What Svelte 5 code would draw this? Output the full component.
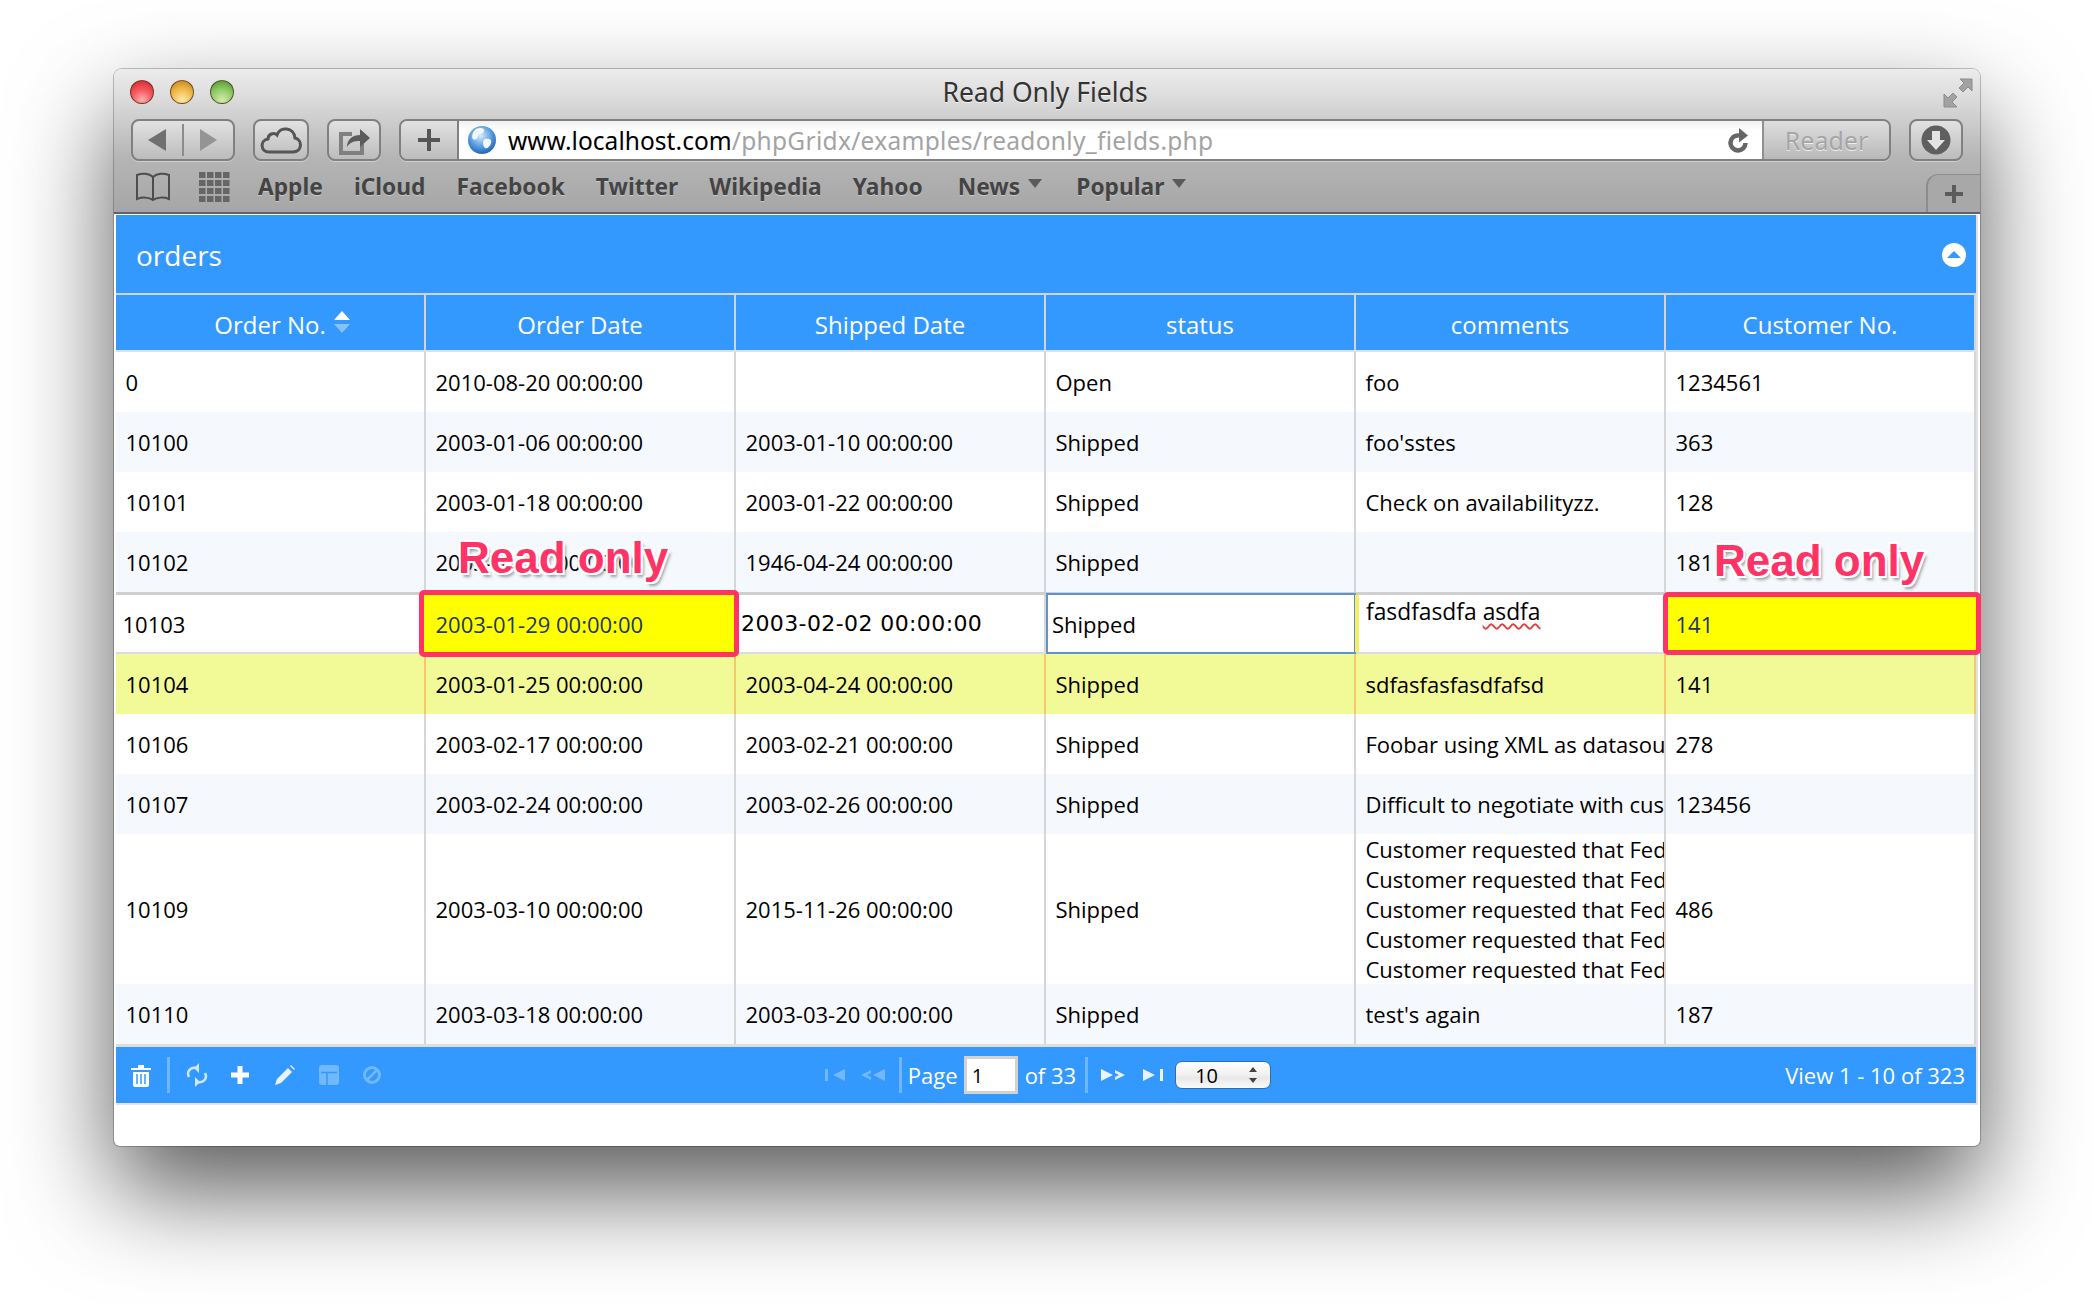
<script>
    const columns = ["Order No.", "Order Date", "Shipped Date", "status", "comments", "Customer No."];

    const fed = "Customer requested that FedEx Ground deliver the shipment";

    const rows = [
        { cells: ["0", "2010-08-20 00:00:00", "", "Open", "foo", "1234561"] },
        { cells: ["10100", "2003-01-06 00:00:00", "2003-01-10 00:00:00", "Shipped", "foo'sstes", "363"], alt: true },
        { cells: ["10101", "2003-01-18 00:00:00", "2003-01-22 00:00:00", "Shipped", "Check on availabilityzz.", "128"] },
        { cells: ["10102", "2003-01-24 00:00:00", "1946-04-24 00:00:00", "Shipped", "", "181"], alt: true },
    ];

    const rowsAfter = [
        { cells: ["10104", "2003-01-25 00:00:00", "2003-04-24 00:00:00", "Shipped", "sdfasfasfasdfafsd", "141"], hover: true },
        { cells: ["10106", "2003-02-17 00:00:00", "2003-02-21 00:00:00", "Shipped", "Foobar using XML as datasource for the grid", "278"] },
        { cells: ["10107", "2003-02-24 00:00:00", "2003-02-26 00:00:00", "Shipped", "Difficult to negotiate with customer on price", "123456"], alt: true },
        { cells: ["10109", "2003-03-10 00:00:00", "2015-11-26 00:00:00", "Shipped", [fed, fed, fed, fed, fed], "486"] },
        { cells: ["10110", "2003-03-18 00:00:00", "2003-03-20 00:00:00", "Shipped", "test's again", "187"], alt: true },
    ];

    const bookmarks = ["Apple", "iCloud", "Facebook", "Twitter", "Wikipedia", "Yahoo"];
</script>

{#snippet gridRow(row)}
    <div class="row" class:alt={row.alt} class:hover={row.hover}>
        {#each row.cells as cell}
            <div class="cell">
                {#if Array.isArray(cell)}
                    <div class="lines">
                        {#each cell as line}
                            <div>{line}</div>
                        {/each}
                    </div>
                {:else}
                    {cell}
                {/if}
            </div>
        {/each}
    </div>
{/snippet}

<div class="page">
<div class="window">
    <div class="chrome">
        <div class="titlebar">
            <div class="lights">
                <span class="light red"></span>
                <span class="light amber"></span>
                <span class="light green"></span>
            </div>
            <div class="title">Read Only Fields</div>
            <svg class="expand" width="30" height="30" viewBox="0 0 30 30">
                <path d="M17 1h12v12l-4-4-5 5-4-4 5-5zM1 29V16l4 4 5-5 4 4-5 5 5 5z" fill="#a2a2a2" stroke="#8c8c8c" />
            </svg>
        </div>

        <div class="toolbar">
            <div class="btn navs">
                <svg width="100" height="38" viewBox="0 0 100 38">
                    <path d="M33 8v22L15 19z" fill="#707070" />
                    <path d="M67 8v22l17-11z" fill="#949494" />
                    <path d="M50 3v32" stroke="#8c8c8c" stroke-width="2" />
                </svg>
            </div>
            <div class="btn icon-btn cloud">
                <svg width="42" height="30" viewBox="0 0 42 30">
                    <path d="M9 27c-9 0-9-12-1-13 0-5 6-7 9-4 3-9 17-8 18 3 8 2 7 14-2 14z" fill="none" stroke="#555" stroke-width="3" />
                </svg>
            </div>
            <div class="btn icon-btn share">
                <svg width="34" height="32" viewBox="0 0 34 32">
                    <path d="M2 8h13v4H6v15h17v-7h4v11H2z" fill="#808080" />
                    <path d="M10 23c0-8 6-12 13-12V5l10 9-10 9v-6c-6 0-10 1-13 6z" fill="#5c5c5c" />
                </svg>
            </div>
            <div class="address">
                <div class="add">
                    <svg width="22" height="22" viewBox="0 0 22 22">
                        <path d="M9 0h4v9h9v4h-9v9H9v-9H0V9h9z" fill="#555" />
                    </svg>
                </div>
                <div class="url">
                    <svg class="globe" width="28" height="30" viewBox="0 0 28 30">
                        <defs>
                            <radialGradient id="sea" cx="45%" cy="35%" r="70%">
                                <stop offset="0" stop-color="#d6ecfb" />
                                <stop offset="0.6" stop-color="#4f95dd" />
                                <stop offset="1" stop-color="#1d5bb0" />
                            </radialGradient>
                        </defs>
                        <circle cx="14" cy="15" r="14" fill="url(#sea)" />
                        <path d="M8 4c4-2 9-1 8 2-1 4-5 2-6 5s-3 5-5 3 0-8 3-10zM17 14c4-1 7 0 6 4s-4 6-6 5-3-8 0-9z" fill="#f2f7fb" />
                    </svg>
                    <span class="host">www.localhost.com</span><span class="path">/phpGridx/examples/readonly_fields.php</span>
                    <svg class="reload" width="22" height="26" viewBox="0 0 22 26">
                        <path d="M11 8.500A7.500 7.500 0 1 0 17.500 16" fill="none" stroke="#666" stroke-width="4.500" />
                        <path d="M11 1l9 7.500-9 7z" fill="#666" />
                    </svg>
                </div>
                <div class="reader">Reader</div>
            </div>
            <div class="btn icon-btn download">
                <svg width="30" height="30" viewBox="0 0 30 30">
                    <circle cx="15" cy="15" r="14.500" fill="#5f5f5f" />
                    <path d="M11 6h8v9h5l-9 10-9-10h5z" fill="#e4e4e4" />
                </svg>
            </div>
        </div>

        <div class="bookmarks">
            <svg class="book" width="36" height="32" viewBox="0 0 36 32">
                <path d="M18 6C14 2 7 2 2 4v24c5-2 12-2 16 1 4-3 11-3 16-1V4c-5-2-12-2-16 2zM18 6v23" fill="none" stroke="#4d4d4d" stroke-width="2" />
            </svg>
            <svg class="apps" width="31" height="30" viewBox="0 0 31 30">
                {#each [0, 1, 2, 3] as r}
                    {#each [0, 1, 2, 3] as c}
                        <rect x={c * 8} y={r * 8} width="6.500" height="6" fill="#666" />
                    {/each}
                {/each}
            </svg>
            {#each bookmarks as mark}
                <span class="mark">{mark}</span>
            {/each}
            <span class="mark menu news">News<i class="caret"></i></span>
            <span class="mark menu popular">Popular<i class="caret"></i></span>
            <div class="newtab">
                <svg width="18" height="18" viewBox="0 0 18 18">
                    <path d="M7 0h4v7h7v4h-7v7H7v-7H0V7h7z" fill="#5b5b5b" />
                </svg>
            </div>
        </div>
    </div>

    <div class="content">
        <div class="grid">
            <div class="caption">
                <span>orders</span>
                <svg width="24" height="24" viewBox="0 0 24 24">
                    <circle cx="12" cy="12" r="12" fill="#fff" />
                    <path d="M5 15l7-7 7 7z" fill="#3399ff" />
                </svg>
            </div>
            <div class="head">
                {#each columns as col, i}
                    <div class="th">
                        {col}
                        {#if i === 0}
                            <svg class="sort" width="16" height="22" viewBox="0 0 16 22">
                                <path d="M8 0l8 9H0z" fill="#fff" />
                                <path d="M8 22l8-9H0z" fill="#85c2ff" />
                            </svg>
                        {/if}
                    </div>
                {/each}
            </div>

            {#each rows as row}
                {@render gridRow(row)}
            {/each}

            <div class="row editing">
                <div class="cell plain">10103</div>
                <div class="cell readonly">2003-01-29 00:00:00</div>
                <div class="cell mono">2003-02-02 00:00:00</div>
                <div class="cell focus">Shipped</div>
                <div class="cell area">fasdfasdfa <span class="typo">asdfa</span></div>
                <div class="cell readonly last">141</div>
            </div>

            {#each rowsAfter as row}
                {@render gridRow(row)}
            {/each}

            <div class="pager">
                <div class="pg-left">
                    <svg class="ico" width="22" height="24" viewBox="0 0 22 24">
                        <path d="M1 5h20v2H1zM8 2h6v3H8zM3 9h16v13a2 2 0 0 1-2 2H5a2 2 0 0 1-2-2z" fill="#fff" />
                        <path d="M7 11v10M11 11v10M15 11v10" stroke="#3399ff" stroke-width="1.500" />
                    </svg>
                    <span class="pg-sep"></span>
                    <svg class="ico refresh" width="22" height="24" viewBox="0 0 22 24">
                        <path d="M3 14c-3-6 2-10 7-9M19 10c3 6-2 10-7 9" fill="none" stroke="#cfe6ff" stroke-width="2.500" />
                        <path d="M13 0v10L8 5zM9 14v10l5-5z" fill="#cfe6ff" />
                    </svg>
                    <svg class="ico plus" width="18" height="18" viewBox="0 0 18 18">
                        <path d="M6.500 0h5v6.500H18v5h-6.500V18h-5v-6.500H0v-5h6.500z" fill="#fff" />
                    </svg>
                    <svg class="ico pencil" width="20" height="20" viewBox="0 0 20 20">
                        <path d="M13 3l4 4L6 18l-6 2 2-6zM15 1l1-1 4 4-1 1z" fill="#e8f3ff" />
                    </svg>
                    <svg class="ico save off" width="20" height="20" viewBox="0 0 20 20">
                        <rect width="20" height="20" rx="3" fill="#fff" />
                        <path d="M2 7.500h16M8 8v12" stroke="#3399ff" stroke-width="1.500" />
                    </svg>
                    <svg class="ico cancel off" width="18" height="18" viewBox="0 0 18 18">
                        <circle cx="9" cy="9" r="7.500" fill="none" stroke="#fff" stroke-width="3" />
                        <path d="M4 14L14 4" stroke="#fff" stroke-width="2.500" />
                    </svg>
                </div>

                <div class="pg-center">
                    <svg class="off" width="20" height="14" viewBox="0 0 20 14">
                        <path d="M0 1h3v12H0zM8 7l12-6v12z" fill="#fff" />
                    </svg>
                    <svg class="off prev" width="24" height="14" viewBox="0 0 24 14">
                        <path d="M0 7l10-5v3l-4 2 4 2v3zM12 7l12-6v12z" fill="#fff" />
                    </svg>
                    <span class="pg-sep"></span>
                    <span class="pg-text page-word">Page</span>
                    <span class="pg-input">1</span>
                    <span class="pg-text of-word">of 33</span>
                    <span class="pg-sep"></span>
                    <svg class="next" width="24" height="14" viewBox="0 0 24 14">
                        <path d="M0 1l12 6-12 6zM14 2l10 5-10 5V9l4-2-4-2z" fill="#e8f3ff" />
                    </svg>
                    <svg class="last-ico" width="20" height="14" viewBox="0 0 20 14">
                        <path d="M0 1l12 6-12 6zM17 1h3v12h-3z" fill="#e8f3ff" />
                    </svg>
                    <div class="pg-select">
                        <span>10</span>
                        <svg width="10" height="16" viewBox="0 0 10 16">
                            <path d="M5 0l4 5H1zM5 16l4-5H1z" fill="#444" />
                        </svg>
                    </div>
                </div>

                <div class="pg-right">View 1 - 10 of 323</div>
            </div>

            <div class="note note-date">Read only</div>
            <div class="note note-customer">Read only</div>
        </div>
    </div>
</div>
</div>

<style>
    :global(body) {
        background: #fff;
    }

    .page {
        height: 1304px;
        overflow: hidden;
        padding: 69px 0 0 114px;
        box-sizing: border-box;
    }

    .window {
        box-sizing: border-box;
        width: 1866px;
        height: 1077px;
        display: flex;
        flex-direction: column;
        background: #fff;
        border-radius: 8px 8px 6px 6px;
        box-shadow:
            0 45px 100px rgba(0, 0, 0, 0.65),
            0 0 0 1px rgba(90, 90, 90, 0.35);
    }

    .chrome {
        box-sizing: border-box;
        height: 145px;
        flex: none;
        display: flex;
        flex-direction: column;
        background: linear-gradient(#ececec, #dcdcdc 20%, #b5b5b5 62%, #a6a6a6);
        border-radius: 8px 8px 0 0;
        border-bottom: 2px solid #626262;
        font-family: "Noto Sans", sans-serif;
    }

    .titlebar {
        height: 50px;
        flex: none;
        position: relative;
        display: flex;
        align-items: center;
        justify-content: center;
    }

    .lights {
        position: absolute;
        left: 16px;
        top: 11px;
        display: flex;
        gap: 16px;
    }

    .light {
        width: 24px;
        height: 24px;
        border-radius: 50%;
        box-sizing: border-box;
        border: 1px solid rgba(70, 40, 20, 0.7);
    }

    .red {
        background: radial-gradient(circle at 50% 85%, #ffb0b0, #f65a5f 45%, #d82c30 90%);
    }

    .amber {
        background: radial-gradient(circle at 50% 85%, #ffe8a8, #f0b849 50%, #c88a20 90%);
    }

    .green {
        background: radial-gradient(circle at 50% 85%, #d8e8b0, #8fcb63 50%, #5a9a35 90%);
    }

    .title {
        font-size: 26.500px;
        color: #333;
        text-shadow: 0 1px 0 rgba(255, 255, 255, 0.6);
        margin-top: -4px;
        margin-left: -4px;
    }

    .expand {
        position: absolute;
        right: 7px;
        top: 9px;
    }

    .toolbar {
        height: 42px;
        flex: none;
        display: flex;
        padding: 0 17px;
        gap: 18px;
        box-sizing: border-box;
    }

    .btn {
        box-sizing: border-box;
        height: 42px;
        border: 2px solid #808080;
        border-radius: 8px;
        background: linear-gradient(#e2e2e2, #bcbcbc);
        display: flex;
        align-items: center;
        justify-content: center;
        box-shadow: 0 1px 0 rgba(255, 255, 255, 0.4);
    }

    .navs {
        width: 104px;
    }

    .cloud {
        width: 56px;
    }

    .share {
        width: 54px;
    }

    .download {
        width: 54px;
    }

    .address {
        flex: 1;
        display: flex;
        height: 42px;
        box-sizing: border-box;
        border: 2px solid #808080;
        border-radius: 8px;
        overflow: hidden;
        box-shadow: 0 1px 0 rgba(255, 255, 255, 0.4);
    }

    .add {
        width: 56px;
        flex: none;
        display: flex;
        align-items: center;
        justify-content: center;
        background: linear-gradient(#e2e2e2, #bcbcbc);
        border-right: 2px solid #808080;
    }

    .url {
        flex: 1;
        display: flex;
        align-items: center;
        background: linear-gradient(#f0f0f0, #fff 25%);
        font-size: 24.500px;
        padding-left: 9px;
    }

    .globe {
        margin-right: 12px;
    }

    .host {
        color: #000;
        letter-spacing: 0.05px;
    }

    .path {
        color: #a3a3a3;
        letter-spacing: 0.3px;
    }

    .reload {
        margin-left: auto;
        margin-right: 12px;
    }

    .reader {
        width: 127px;
        flex: none;
        box-sizing: border-box;
        display: flex;
        align-items: center;
        justify-content: center;
        background: linear-gradient(#dedede, #b9b9b9);
        border-left: 2px solid #909090;
        color: #a5a5a5;
        font-size: 25px;
        text-shadow: 0 1px 0 #eee;
    }

    .bookmarks {
        flex: 1;
        display: flex;
        align-items: center;
        position: relative;
        padding-left: 21px;
    }

    .book {
        margin-right: 28px;
    }

    .apps {
        margin-right: 28px;
    }

    .mark {
        font-size: 22.750px;
        font-weight: 700;
        color: #444;
        margin-right: 31px;
        text-shadow: 0 1px 0 rgba(255, 255, 255, 0.35);
    }

    .menu {
        display: flex;
        align-items: center;
        gap: 8px;
    }

    .news {
        margin-left: 4px;
    }

    .popular {
        margin-left: 3px;
    }

    .caret {
        width: 0;
        height: 0;
        border: 7px solid transparent;
        border-top: 9px solid #5a5a5a;
        border-bottom: 0;
        margin-top: -6px;
    }

    .newtab {
        position: absolute;
        right: 0;
        bottom: 0;
        width: 54px;
        height: 38px;
        box-sizing: border-box;
        display: flex;
        align-items: center;
        justify-content: center;
        background: #a8a8a8;
        border-radius: 12px 0 0 0;
        border-left: 2px solid #8c8c8c;
        border-top: 1px solid #8c8c8c;
    }

    .content {
        flex: 1;
        padding: 1px 2px 0;
    }

    .grid {
        position: relative;
        width: 1860px;
        border-right: 2px solid #e2e2e2;
        border-bottom: 2px solid #e5e5e5;
        font-family: "Open Sans", sans-serif;
        font-size: 22px;
        color: #000;
    }

    .caption {
        height: 78px;
        background: #3399ff;
        color: #fff;
        display: flex;
        align-items: center;
        justify-content: space-between;
        box-sizing: border-box;
        padding: 2px 10px 0 20px;
        font-size: 28px;
    }

    .head {
        display: grid;
        grid-template-columns: repeat(6, 310px);
        border-top: 2px solid #d3d3d3;
        border-bottom: 2px solid #e0e0e0;
    }

    .th {
        height: 55px;
        background: #3399ff;
        color: #fff;
        font-size: 24px;
        display: flex;
        align-items: center;
        justify-content: center;
        gap: 8px;
        box-sizing: border-box;
        padding-top: 3px;
        border-right: 2px solid #d3d3d3;
    }

    .sort {
        margin: -5px -24px 0 0;
    }

    .row {
        display: grid;
        grid-template-columns: repeat(6, 310px);
        background: #fff;
    }

    .row.alt {
        background: #f5f9fe;
    }

    .row.hover {
        background: #f2fa98;
    }

    .cell {
        box-sizing: border-box;
        min-height: 60px;
        padding-left: 9.500px;
        display: flex;
        align-items: center;
        white-space: nowrap;
        overflow: hidden;
        border-right: 2px solid #d6d6d6;
    }

    .row.hover .cell {
        border-right-color: #f5c96a;
    }

    .lines {
        line-height: 30px;
    }

    .editing {
        border-top: 3px solid #cfcfcf;
        border-bottom: 2px solid #dcdcdc;
        height: 62px;
        box-sizing: border-box;
    }

    .editing .cell {
        min-height: 0;
    }

    .plain {
        padding-left: 6.500px;
    }

    .cell.readonly {
        position: relative;
        overflow: visible;
        background: #ffff00;
        color: #22365f;
        margin: -2px 0 -2px -4px;
        padding-left: 13.500px;
        outline: 5px solid #ff3366;
        outline-offset: -2px;
        border-radius: 2px;
        z-index: 1;
    }

    .cell.readonly.last {
        margin: 0 -2px 0 0;
        padding-left: 9.500px;
    }

    .cell.mono {
        padding-left: 5px;
        font-family: "DejaVu Sans", sans-serif;
        font-size: 22px;
        letter-spacing: 0.4px;
    }

    .cell.focus {
        padding-left: 4px;
        border: 2px solid #5f94cf;
        margin: -2px 0;
    }

    .cell.area {
        align-items: flex-start;
        padding: 1px 0 0 7px;
        border-left: 4px solid #f7ef60;
        margin-left: -1px;
        font-size: 22.800px;
    }

    .typo {
        text-decoration: underline wavy #e04040 2px;
        text-underline-offset: 3px;
        margin-left: 6px;
    }

    .pager {
        height: 59px;
        box-sizing: border-box;
        border-top: 3px solid #dedede;
        background: #3399ff;
        background-clip: padding-box;
        display: grid;
        grid-template-columns: 1fr auto 1fr;
        align-items: center;
        color: #fff;
    }

    .pg-left,
    .pg-center {
        display: flex;
        align-items: center;
    }

    .pg-left {
        padding-left: 14px;
    }

    .pg-center {
        margin-left: 4px;
    }

    .pg-left .pg-sep {
        margin: 0 16px 0 15px;
    }

    .pg-sep {
        width: 3px;
        height: 36px;
        background: rgba(255, 255, 255, 0.3);
    }

    .refresh {
        margin-right: 23px;
    }

    .plus {
        margin-right: 26px;
    }

    .pencil {
        margin-right: 24px;
    }

    .save {
        margin-right: 24px;
    }

    .off {
        opacity: 0.3;
    }

    .prev {
        margin-left: 16px;
        margin-right: 14px;
    }

    .page-word {
        margin: 0 6px 0 6px;
    }

    .of-word {
        margin: 0 9px 0 7px;
    }

    .pg-input {
        box-sizing: border-box;
        width: 54px;
        height: 38px;
        background: #fff;
        border: 3px solid #d2d2d2;
        color: #000;
        font-size: 20px;
        padding-left: 5px;
        display: flex;
        align-items: center;
    }

    .next {
        margin-left: 13px;
        margin-right: 18px;
    }

    .last-ico {
        margin-right: 12px;
    }

    .pg-select {
        box-sizing: border-box;
        width: 96px;
        height: 28px;
        border-radius: 7px;
        border: 1px solid #2a6fb5;
        background: linear-gradient(#fff, #f0f0f0 50%, #e8e8e8 60%, #fafafa);
        color: #000;
        font-size: 20px;
        display: flex;
        align-items: center;
        justify-content: space-between;
        padding: 0 12px 0 19px;
    }

    .pg-right {
        text-align: right;
        padding-right: 11px;
    }

    .note {
        position: absolute;
        z-index: 2;
        font-family: "Liberation Sans", sans-serif;
        font-weight: 700;
        font-size: 44px;
        line-height: 50px;
        color: #ff3366;
        white-space: nowrap;
        text-shadow:
            2px 2px 0 #fff,
            -2px -2px 0 #fff,
            2px -2px 0 #fff,
            -2px 2px 0 #fff,
            3px 4px 3px rgba(120, 120, 120, 0.7);
    }

    .note-date {
        left: 342px;
        top: 318px;
    }

    .note-customer {
        left: 1598px;
        top: 321px;
    }
</style>
